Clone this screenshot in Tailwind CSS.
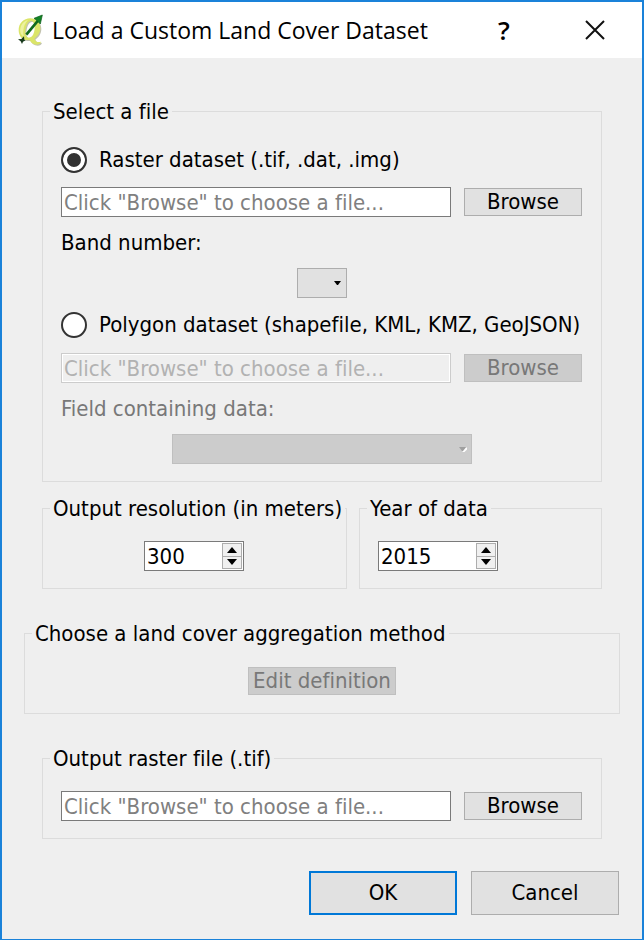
<!DOCTYPE html>
<html lang="en">
<head>
<meta charset="utf-8">
<meta name="viewport" content="width=device-width, initial-scale=1">
<title>Load a Custom Land Cover Dataset</title>
<script src="https://cdn.jsdelivr.net/npm/@tailwindcss/browser@4"></script>
</head>
<body class="flex min-h-screen flex-col border-2 border-[#1a82d9] bg-[#efefef] font-['DejaVu_Sans_Condensed','DejaVu_Sans',sans-serif] text-[22px] leading-[26px] text-black [font-variant-ligatures:none]">
  <header class="flex h-14 items-center bg-white pl-[15px] pr-[37px]">
    <svg class="mr-[7px] h-8 w-7 shrink-0" viewBox="0 0 84 96" aria-hidden="true">
      <path fill-rule="evenodd" transform="translate(3 3)" d="M5 50C4 28 20 13 40 13c18 0 30 12 30 29 0 15-9 26-18 32 4 9 10 12 20 9-1 6-6 9-13 9-11 0-18-6-21-14C18 80 6 68 5 50Zm20 5c0 10 4 16 11 16 11 0 17-15 17-31 0-12-4-19-11-19-10 0-17 17-17 34Z" fill="#c3c3b0"/>
      <path fill-rule="evenodd" d="M5 50C4 28 20 13 40 13c18 0 30 12 30 29 0 15-9 26-18 32 4 9 10 12 20 9-1 6-6 9-13 9-11 0-18-6-21-14C18 80 6 68 5 50Zm20 5c0 10 4 16 11 16 11 0 17-15 17-31 0-12-4-19-11-19-10 0-17 17-17 34Z" fill="#dbe568"/>
      <path d="M10 44c2-13 11-23 23-26-9 8-13 20-14 32-1 8 0 14 3 19-9-5-14-14-12-25Z" fill="#edf2a0"/>
      <path d="M28 62 63 20" stroke="#116a1c" stroke-width="8"/>
      <path d="M76 3 51 13l7 5 5 5 7 7Z" fill="#138326" stroke="#0b5916" stroke-width="2"/>
      <path d="m3 76 10-1 8-8 1 10 4 2-8 4-3 7-4-8Z" fill="#18391c"/>
    </svg>
    <h1 class="flex-1 truncate font-['Open_Sans','Noto_Sans',sans-serif] text-[23px] leading-8">Load a Custom Land Cover Dataset</h1>
    <button type="button" aria-label="Help" class="w-[22px] font-['Open_Sans','Noto_Sans',sans-serif] text-[26px] font-semibold leading-8">?</button>
    <button type="button" aria-label="Close" class="ml-[70px]">
      <svg class="size-5" viewBox="0 0 20 20" fill="none" stroke="#111" stroke-width="2" aria-hidden="true"><path d="m1 1 18 18M19 1 1 19"/></svg>
    </button>
  </header>

  <form class="flex flex-col px-[22px] pb-6 pt-[39px]">
    <fieldset class="mx-[18px] border border-[#dcdcdc] pb-[17px] pl-[18px] pr-[19px] pt-5">
      <legend class="-ml-[11px] px-[3px] pt-[2px]">Select a file</legend>
      <div class="flex flex-col gap-3">
        <label class="flex h-[30px] items-center gap-3 whitespace-nowrap">
          <input type="radio" name="source" checked class="size-[26px] shrink-0 appearance-none rounded-full border-2 border-[#333] bg-white checked:bg-[#333] checked:shadow-[inset_0_0_0_4px_white]">
          Raster dataset (.tif, .dat, .img)
        </label>
        <div class="flex items-center gap-[13px]">
          <input type="text" aria-label="Raster file" placeholder='Click "Browse" to choose a file...' class="h-[30px] min-w-0 flex-1 border border-[#7a7a7a] bg-white px-[2px] placeholder:text-[#808080]">
          <button type="button" class="h-7 w-[118px] border border-[#adadad] bg-[#e1e1e1] leading-[26px]">Browse</button>
        </div>
        <label for="band" class="h-[27px] pt-px">Band number:</label>
        <div class="grid h-[30px] w-[50px] self-center">
          <select id="band" class="col-start-1 row-start-1 appearance-none border border-[#adadad] bg-[#e1e1e1]"></select>
          <svg class="pointer-events-none col-start-1 row-start-1 mr-[6px] h-1 w-[7px] self-center justify-self-end" viewBox="0 0 7 4" aria-hidden="true"><path d="M0 0h7L4 4H3Z" fill="#000"/></svg>
        </div>
        <label class="flex h-[30px] items-center gap-3 whitespace-nowrap">
          <input type="radio" name="source" class="size-[26px] shrink-0 appearance-none rounded-full border-2 border-[#333] bg-white checked:bg-[#333] checked:shadow-[inset_0_0_0_4px_white]">
          Polygon dataset (shapefile, KML, KMZ, GeoJSON)
        </label>
        <div class="flex items-center gap-[13px] pt-px">
          <input type="text" disabled aria-label="Polygon file" placeholder='Click "Browse" to choose a file...' class="h-[30px] min-w-0 flex-1 border border-[#ccc] bg-[#efefef] px-[2px] shadow-[inset_0_0_0_1px_white] placeholder:text-[#b2b2b2]">
          <button type="button" disabled class="h-7 w-[118px] border border-[#bfbfbf] bg-[#ccc] leading-[26px] text-[#787878]">Browse</button>
        </div>
        <label for="field" class="h-[27px] pt-px text-[#787878]">Field containing data:</label>
        <div class="grid h-[30px] w-[300px] self-center">
          <select id="field" disabled class="col-start-1 row-start-1 appearance-none border border-[#bfbfbf] bg-[#ccc] opacity-100"></select>
          <svg class="pointer-events-none col-start-1 row-start-1 mr-[5px] h-[5px] w-2 self-center justify-self-end" viewBox="0 0 8 5" aria-hidden="true"><path d="M8 1 4 5" stroke="#fff" stroke-width="2"/><path d="M0 0h7L4 4H3Z" fill="#a0a0a0"/></svg>
        </div>
      </div>
    </fieldset>

    <div class="mx-[18px] mt-3 grid grid-cols-[305fr_243fr] gap-3">
      <fieldset class="min-w-0 border border-[#dcdcdc] pb-[17px] pl-[18px] pr-[19px] pt-[19px]">
        <legend class="-ml-[11px] whitespace-nowrap px-[3px] pt-[2px]">Output resolution (in meters)</legend>
        <div class="mx-auto flex h-[30px] w-[100px] border border-[#7a7a7a] bg-white">
          <input type="text" inputmode="numeric" aria-label="Output resolution (in meters)" value="300" class="min-w-0 flex-1 px-[2px] pt-[2px]">
          <div class="my-px mr-px flex w-5 flex-col border border-[#adadad] bg-[#f0f0f0]">
            <button type="button" aria-label="Increase resolution" class="flex flex-1 items-center justify-center border-b border-[#adadad]"><svg class="h-[6px] w-[10px]" viewBox="0 0 10 6"><path d="M5 0 0 6h10Z"/></svg></button>
            <button type="button" aria-label="Decrease resolution" class="flex flex-1 items-center justify-center"><svg class="h-[6px] w-[10px]" viewBox="0 0 10 6"><path d="M5 6 0 0h10Z"/></svg></button>
          </div>
        </div>
      </fieldset>
      <fieldset class="min-w-0 border border-[#dcdcdc] px-[18px] pb-[17px] pt-[19px]">
        <legend class="-ml-[11px] whitespace-nowrap px-[3px] pt-[2px]">Year of data</legend>
        <div class="flex h-[30px] w-[120px] border border-[#7a7a7a] bg-white">
          <input type="text" inputmode="numeric" aria-label="Year of data" value="2015" class="min-w-0 flex-1 px-[2px] pt-[2px]">
          <div class="my-px mr-px flex w-5 flex-col border border-[#adadad] bg-[#f0f0f0]">
            <button type="button" aria-label="Next year" class="flex flex-1 items-center justify-center border-b border-[#adadad]"><svg class="h-[6px] w-[10px]" viewBox="0 0 10 6"><path d="M5 0 0 6h10Z"/></svg></button>
            <button type="button" aria-label="Previous year" class="flex flex-1 items-center justify-center"><svg class="h-[6px] w-[10px]" viewBox="0 0 10 6"><path d="M5 6 0 0h10Z"/></svg></button>
          </div>
        </div>
      </fieldset>
    </div>

    <fieldset class="mt-[30px] border border-[#dcdcdc] px-[18px] pb-[18px] pt-5">
      <legend class="-ml-[11px] px-[3px] pt-[2px]">Choose a land cover aggregation method</legend>
      <button type="button" disabled class="mx-auto block h-7 w-[148px] whitespace-nowrap border border-[#bfbfbf] bg-[#ccc] leading-[26px] text-[#787878]">Edit definition</button>
    </fieldset>

    <fieldset class="mx-[18px] mt-[30px] border border-[#dcdcdc] pb-[17px] pl-[18px] pr-[19px] pt-[19px]">
      <legend class="-ml-[11px] px-[3px] pt-[2px]">Output raster file (.tif)</legend>
      <div class="flex items-center gap-[13px]">
        <input type="text" aria-label="Output raster file (.tif)" placeholder='Click "Browse" to choose a file...' class="h-[30px] min-w-0 flex-1 border border-[#7a7a7a] bg-white px-[2px] placeholder:text-[#808080]">
        <button type="button" class="h-7 w-[118px] border border-[#adadad] bg-[#e1e1e1] leading-[26px]">Browse</button>
      </div>
    </fieldset>

    <div class="mt-8 flex justify-end gap-[14px] pr-px">
      <button type="submit" class="h-11 w-[148px] border-2 border-[#0078d7] bg-[#e1e1e1]">OK</button>
      <button type="button" class="h-11 w-[148px] border border-[#adadad] bg-[#e1e1e1]">Cancel</button>
    </div>
  </form>
</body>
</html>
